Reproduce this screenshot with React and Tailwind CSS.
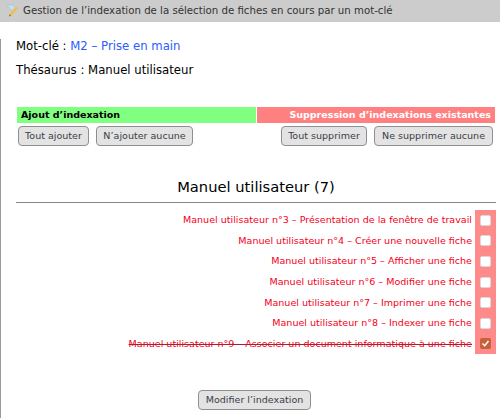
const rows = [
  { label: 'Manuel utilisateur n°3 – Présentation de la fenêtre de travail' },
  { label: 'Manuel utilisateur n°4 – Créer une nouvelle fiche' },
  { label: 'Manuel utilisateur n°5 – Afficher une fiche' },
  { label: 'Manuel utilisateur n°6 – Modifier une fiche' },
  { label: 'Manuel utilisateur n°7 – Imprimer une fiche' },
  { label: 'Manuel utilisateur n°8 – Indexer une fiche' },
  { label: 'Manuel utilisateur n°9 – Associer un document informatique à une fiche', checked: true },
];

const btn = 'h-[20px] rounded-[4px] border border-[#8f8f8f] bg-[#e3e3e3] text-[9.55px] leading-none text-[#3a4048] whitespace-nowrap';

function PencilIcon() {
  return (
    <svg width="16" height="16" viewBox="0 0 16 16" className="shrink-0">
      <path d="M1.5 2 L6 1.5 L9.5 4.5 L6 8 L2.5 5 Z" fill="#c4dcf2" stroke="#9db6cf" strokeWidth="0.5" />
      <path d="M8 5.5 L10.5 4 L12 5.5 L5.5 12.5 L3 13.5 L3.5 11 Z" fill="#eec04e" />
      <path d="M3 13.5 L5 12.8 L3.7 11.3 Z" fill="#7a6a45" />
    </svg>
  );
}

export default function App() {
  return (
    <div className="h-[418px] w-[500px] overflow-hidden bg-white font-['DejaVu_Sans',sans-serif] text-black">
      {/* Title bar */}
      <div className="flex h-[22px] items-center gap-[1px] bg-[#cccccc] pl-[6px] text-[10.2px] text-[#333]">
        <PencilIcon />
        Gestion de l’indexation de la sélection de fiches en cours par un mot-clé
      </div>

      <div className="h-[396px] border-l border-[#999] pl-[15px] pr-[4px]">
        <p className="mt-[17px] text-[11.7px] leading-[15px]">
          Mot-clé : <span className="text-[#2a5cff]">M2 – Prise en main</span>
        </p>
        <p className="mt-[9px] text-[11.7px] leading-[15px]">Thésaurus : Manuel utilisateur</p>

        {/* Bands */}
        <div className="mt-[29px] ml-[1px] mr-[1px] flex h-[16px] text-[9.5px] font-bold leading-[16px]">
          <div className="w-[239px] bg-[#80ff80] pl-[4px]">Ajout d’indexation</div>
          <div className="ml-[1px] flex-1 bg-[#ff8080] pr-[4px] text-right text-white">Suppression d’indexations existantes</div>
        </div>

        <div className="mt-[3px] flex justify-between pl-[2px] pr-[3px]">
          <div className="flex gap-[7px]">
            <button className={btn + ' w-[71px]'}>Tout ajouter</button>
            <button className={btn + ' w-[97px]'}>N’ajouter aucune</button>
          </div>
          <div className="flex gap-[7px]">
            <button className={btn + ' w-[86px]'}>Tout supprimer</button>
            <button className={btn + ' w-[119px]'}>Ne supprimer aucune</button>
          </div>
        </div>

        <h2 className="mt-[32px] text-center text-[14.7px] leading-[18px] font-normal">Manuel utilisateur (7)</h2>
        <div className="mt-[6px] h-px bg-[#888]" />

        {/* Rows */}
        <div className="mt-[7px] flex flex-col">
          {rows.map(({ label, checked }) => (
            <div key={label} className="flex h-[20.6px] items-center justify-end">
              <span className={'pr-[3px] text-[9.55px] text-[#f5001a] ' + (checked ? 'line-through decoration-[#a82030]' : '')}>
                {label}
              </span>
              <div className="flex h-[20.6px] w-[21px] items-center justify-center bg-[#ff8a8a]">
                {checked ? (
                  <div className="flex h-[11px] w-[11px] items-center justify-center rounded-[2px] bg-[#c8603c]">
                    <svg width="9" height="9" viewBox="0 0 9 9">
                      <path d="M1.5 4.5 L3.7 6.7 L7.5 2" fill="none" stroke="#fff" strokeWidth="1.5" />
                    </svg>
                  </div>
                ) : (
                  <div className="h-[11px] w-[11px] rounded-[2px] border border-[#d9d9d9] bg-white" />
                )}
              </div>
            </div>
          ))}
        </div>

        <div className="mt-[36px] flex justify-center pr-[3px]">
          <button className={btn + ' w-[113px]'}>Modifier l’indexation</button>
        </div>
      </div>
    </div>
  );
}
